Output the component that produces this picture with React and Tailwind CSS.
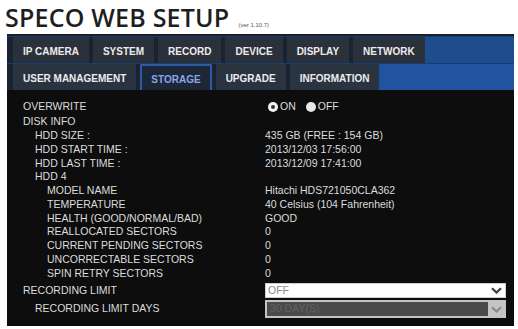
export default function App() {
  const tabs1 = ["IP CAMERA", "SYSTEM", "RECORD", "DEVICE", "DISPLAY", "NETWORK"];
  const tabs2 = ["USER MANAGEMENT", "STORAGE", "UPGRADE", "INFORMATION"];
  const rows = [
    ["pl-0", "DISK INFO", ""],
    ["pl-[12px]", "HDD SIZE :", "435 GB (FREE : 154 GB)"],
    ["pl-[12px]", "HDD START TIME :", "2013/12/03 17:56:00"],
    ["pl-[12px]", "HDD LAST TIME :", "2013/12/09 17:41:00"],
    ["pl-[12px]", "HDD 4", ""],
    ["pl-[24px]", "MODEL NAME", "Hitachi HDS721050CLA362"],
    ["pl-[24px]", "TEMPERATURE", "40 Celsius (104 Fahrenheit)"],
    ["pl-[24px]", "HEALTH (GOOD/NORMAL/BAD)", "GOOD"],
    ["pl-[24px]", "REALLOCATED SECTORS", "0"],
    ["pl-[24px]", "CURRENT PENDING SECTORS", "0"],
    ["pl-[24px]", "UNCORRECTABLE SECTORS", "0"],
    ["pl-[24px]", "SPIN RETRY SECTORS", "0"],
  ];
  const Chevron = ({ color }) => (
    <svg width="11" height="7" viewBox="0 0 11 7">
      <path d="M1 1.2 L5.5 5.5 L10 1.2" fill="none" stroke={color} strokeWidth="2.2" />
    </svg>
  );
  return (
    <div className="w-[518px] h-[329px] bg-white overflow-hidden font-['Liberation_Sans',Arial,sans-serif]">
      <div className="h-[34px] flex items-end pl-[5px] pb-[4px]">
        <div className="font-['Open_Sans',sans-serif] font-semibold text-[25px] leading-[25px] text-[#1e1e1e] tracking-[0.2px]">
          SPECO WEB SETUP
        </div>
        <div className="ml-[9px] mb-[2px] text-[6px] leading-[6px] text-[#555]">(ver 1.10.7)</div>
      </div>
      <div className="ml-[7px] w-[507px] h-[292px] bg-[#0d0d0d] flex flex-col">
        <div className="bg-[#173e74] border-t-2 border-[#1c1f25] pt-px flex flex-col gap-px">
          <div className="flex h-[26px]">
            <div className="flex gap-[4px] bg-[#1a2331] pl-[6px]">
              {tabs1.map((t) => (
                <div key={t} className="h-[26px] px-[10px] pt-[3px] flex items-center bg-[#2b313a] text-[#ececec] font-bold text-[10px]">
                  {t}
                </div>
              ))}
            </div>
            <div className="flex-1 bg-[#1e4d8e]" />
          </div>
          <div className="flex h-[26px]">
            <div className="flex gap-[4px] bg-[#1a2331] pl-[6px]">
              {tabs2.map((t) =>
                t === "STORAGE" ? (
                  <div key={t} className="h-[26px] px-[9px] pt-[3px] flex items-center bg-[#1d2738] border-x-2 border-t-2 border-[#2c5aa6] text-[#8aa6e8] font-bold text-[10px]">
                    {t}
                  </div>
                ) : (
                  <div key={t} className="h-[26px] px-[10px] pt-[3px] flex items-center bg-[#2a3340] text-[#ececec] font-bold text-[10px]">
                    {t}
                  </div>
                )
              )}
            </div>
            <div className="flex-1 bg-[#2154a0]" />
          </div>
        </div>
        <div className="pt-[8px] pl-[16px] pr-[8px] text-[10.5px] text-[#dcdcdc]">
          <div className="flex h-[17px] items-center">
            <div className="w-[242px]">OVERWRITE</div>
            <div className="flex items-center">
              <div className="ml-[3px] w-[10px] h-[10px] rounded-full bg-[#f2f2f2] flex items-center justify-center">
                <div className="w-[4px] h-[4px] rounded-full bg-[#333]" />
              </div>
              <span className="ml-[2px]">ON</span>
              <div className="ml-[10px] w-[10px] h-[10px] rounded-full bg-[#e8e8e8]" />
              <span className="ml-[2px]">OFF</span>
            </div>
          </div>
          {rows.map(([ind, l, v]) => (
            <div key={l} className="flex h-[13.75px] items-center leading-[13px]">
              <div className={`w-[242px] ${ind}`}>{l}</div>
              <div>{v}</div>
            </div>
          ))}
          <div className="flex mt-[3px] h-[15px] items-center">
            <div className="w-[242px]">RECORDING LIMIT</div>
            <div className="flex-1 h-[15px] bg-white border border-[#cfcfcf] flex items-center justify-between pl-[2px] pr-[3px]">
              <span className="text-[#8a8a8a]">OFF</span>
              <Chevron color="#3a3a3a" />
            </div>
          </div>
          <div className="flex mt-[2px] h-[18px] items-center">
            <div className="w-[242px] pl-[12px]">RECORDING LIMIT DAYS</div>
            <div className="flex-1 h-[18px] bg-[#c4c4c4] p-[2px] flex">
              <div className="flex-1 bg-[#4b4b4b] flex items-center pl-[3px] text-[#626262]">30 DAY(S)</div>
              <div className="w-[16px] flex items-center justify-center">
                <Chevron color="#8a8a8a" />
              </div>
            </div>
          </div>
        </div>
      </div>
    </div>
  );
}
